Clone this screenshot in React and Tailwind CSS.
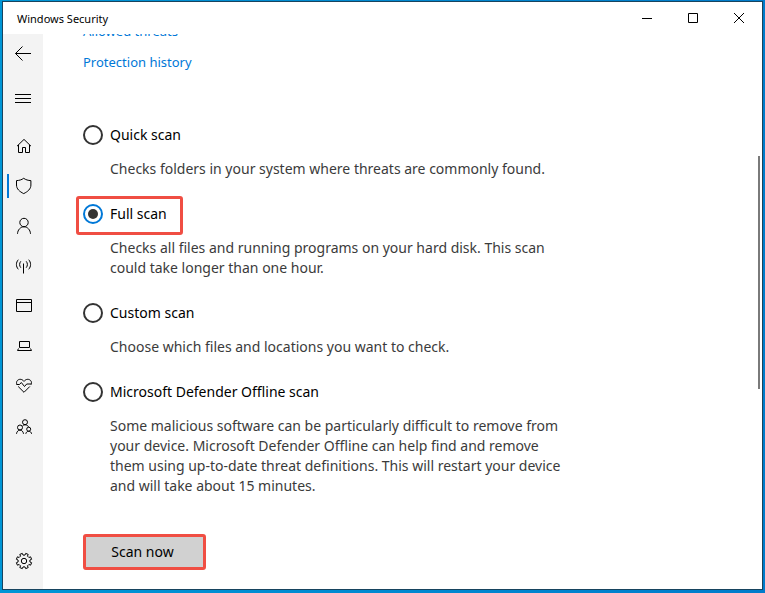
const gearPoints = Array.from({ length: 8 }, (_, i) => {
  const at = (r, deg) => {
    const a = ((i * 45 + 22.5 + deg) * Math.PI) / 180;
    return `${(10 + r * Math.cos(a)).toFixed(2)},${(10 + r * Math.sin(a)).toFixed(2)}`;
  };
  return [at(6, -13), at(7.8, -10), at(7.8, 10), at(6, 13)].join(' ');
}).join(' ');

const navItems = [
  {
    id: 'home',
    label: 'Home',
    icon: <path d="M3 10.2 10 3.4l7 6.8M4.5 9v7.5H8.5V11.5h3v5h4V9" />
  },
  {
    id: 'virus',
    label: 'Virus & threat protection',
    icon: <path d="M9.700 2.300C7.700 3.800 5.200 4.500 2.500 4.600V9c0 4 3.100 6.600 7.200 8.600 4.100-2 7.200-4.600 7.200-8.600V4.600C14.200 4.500 11.700 3.800 9.700 2.300z" />
  },
  {
    id: 'account',
    label: 'Account protection',
    icon: (
      <>
        <circle cx="10" cy="6.500" r="4.200" />
        <path d="M3.500 17.800c.2-4 3-7 6.500-7s6.300 3 6.500 7" />
      </>
    )
  },
  {
    id: 'firewall',
    label: 'Firewall & network protection',
    icon: (
      <>
        <path d="M9.500 7.500v10" />
        <path d="M6.800 5.300c-1.600 1.900-1.600 4.500 0 6.400M4.300 3.700c-2.500 2.800-2.500 6.800 0 9.600M12.200 5.300c1.600 1.900 1.600 4.500 0 6.400M14.700 3.700c2.500 2.800 2.500 6.800 0 9.600" />
      </>
    )
  },
  {
    id: 'app',
    label: 'App & browser control',
    icon: <path d="M2.500 3.500h15v12h-15zM2.500 6.500h15" />
  },
  {
    id: 'device',
    label: 'Device security',
    icon: <path d="M5.500 5.500h10v6h-10zM4.500 12.500 3.500 14.500h14l-1-2" />
  },
  {
    id: 'health',
    label: 'Device performance & health',
    icon: (
      <>
        <path d="M2.900 8.500C1.600 5.300 4 3.300 6.200 3.300c1.600 0 2.800.8 3.800 2.100 1-1.300 2.200-2.100 3.800-2.100C16 3.300 18.400 5.300 17.100 8.500" />
        <path d="M2.500 8.500h3l1.800-2 3.200 4 2.200-2.500h4.800M4.200 10.500 10 16.300l5.800-5.800" />
      </>
    )
  },
  {
    id: 'family',
    label: 'Family options',
    icon: (
      <>
        <circle cx="11" cy="6.200" r="2.500" />
        <circle cx="6" cy="11.500" r="2.500" />
        <circle cx="14.700" cy="13.200" r="2" />
        <path d="M2.500 17.800c.3-2.200 1.700-3.700 3.500-3.700s3.200 1.500 3.500 3.700M11.800 17.800c.3-1.600 1.400-2.500 2.900-2.500s2.600.9 2.900 2.500M8.600 9.900c.6-.7 1.400-1.100 2.400-1.100 1.800 0 3.200 1 3.700 2.400" />
      </>
    )
  }
];

const scans = [
  {
    id: 'quick',
    label: 'Quick scan',
    text: 'Checks folders in your system where threats are commonly found.'
  },
  {
    id: 'full',
    label: 'Full scan',
    text: 'Checks all files and running programs on your hard disk. This scan could take longer than one hour.',
    highlighted: true
  },
  {
    id: 'custom',
    label: 'Custom scan',
    text: 'Choose which files and locations you want to check.'
  },
  {
    id: 'offline',
    label: 'Microsoft Defender Offline scan',
    text: 'Some malicious software can be particularly difficult to remove from your device. Microsoft Defender Offline can help find and remove them using up-to-date threat definitions. This will restart your device and will take about 15 minutes.'
  }
];

function Icon({ children }) {
  return (
    <svg className="size-5" viewBox="0 0 20 20" fill="none" stroke="currentColor">
      {children}
    </svg>
  );
}

function SideButton({ label, active, children }) {
  return (
    <button type="button" aria-label={label} className="relative flex h-10 w-full items-center justify-center pl-0.5">
      {active && <span className="absolute left-1 h-6 w-0.5 bg-[#0078d7]" />}
      <Icon>{children}</Icon>
    </button>
  );
}

function WindowButton({ label, children }) {
  return (
    <button type="button" aria-label={label} className="flex h-8 w-[46px] items-center justify-center">
      <svg className="size-3" viewBox="0 0 12 12" fill="none" stroke="currentColor">
        {children}
      </svg>
    </button>
  );
}

export default function App() {
  return (
    <div className="flex min-h-screen bg-linear-to-r from-[#0096d6] to-[#007ccb] px-0.5 pt-px pb-[3px] font-['Noto_Sans','Open_Sans',sans-serif] text-sm leading-5 text-black">
      <div className="flex flex-1 flex-col border border-[#17445f] bg-white">
        <header className="flex h-8 items-center">
          <h1 className="flex-1 pt-0.5 pl-3.5 text-[11px]">Windows Security</h1>
          <WindowButton label="Minimize">
            <path d="M1 6.500h10" />
          </WindowButton>
          <WindowButton label="Maximize">
            <path d="M1.500 1.500h9v9h-9z" />
          </WindowButton>
          <WindowButton label="Close">
            <path d="m1 1 10 10M11 1 1 11" />
          </WindowButton>
        </header>

        <div className="flex flex-1">
          <aside className="flex w-10 shrink-0 flex-col bg-[#f3f3f3] pb-2">
            <SideButton label="Back">
              <path d="M1.500 9.500H17M8.500 2.500l-7 7 7 7" />
            </SideButton>
            <div className="mt-1">
              <SideButton label="Open navigation">
                <path d="M1 6.500h16M1 10.500h16M1 14.500h16" />
              </SideButton>
            </div>
            <nav className="mt-2 flex-1">
              {navItems.map((item) => (
                <SideButton key={item.id} label={item.label} active={item.id === 'virus'}>
                  {item.icon}
                </SideButton>
              ))}
            </nav>
            <SideButton label="Settings">
              <polygon points={gearPoints} />
              <circle cx="10" cy="10" r="2.700" />
            </SideButton>
          </aside>

          <main className="relative flex-1 overflow-hidden px-10">
            <div className="-mt-[13px] flex flex-col items-start gap-[11px] text-[13px] text-[#0078d7]">
              <a href="#allowed">Allowed threats</a>
              <a href="#history">Protection history</a>
            </div>

            <form className="mt-[53px]">
              <div className="flex flex-col gap-[25px]">
                {scans.map((scan) => (
                  <div key={scan.id}>
                    <label className="relative flex w-fit items-center gap-[7px]">
                      <input
                        type="radio"
                        name="scan"
                        value={scan.id}
                        defaultChecked={scan.id === 'full'}
                        className="size-5 appearance-none rounded-full border-2 border-[#333] bg-clip-content p-[3px] checked:border-[#0078d7] checked:bg-[#333]"
                      />
                      {scan.label}
                      {scan.highlighted && (
                        <span className="absolute -top-2 -right-4 -bottom-[11px] -left-[7px] rounded-[3px] border-3 border-[#f04e43]" />
                      )}
                    </label>
                    <p className="mt-3.5 ml-[27px] max-w-[464px] text-[#3b3b3b]">{scan.text}</p>
                  </div>
                ))}
              </div>
              <button
                type="button"
                className="mt-[38px] h-9 w-[123px] rounded-[3px] border-3 border-[#f04e43] bg-[#d1d1d1] pr-1"
              >
                Scan now
              </button>
            </form>

            <div className="absolute top-[22%] right-0.5 h-[42%] w-0.5 bg-[#7a7a7a]" />
          </main>
        </div>
      </div>
    </div>
  );
}
